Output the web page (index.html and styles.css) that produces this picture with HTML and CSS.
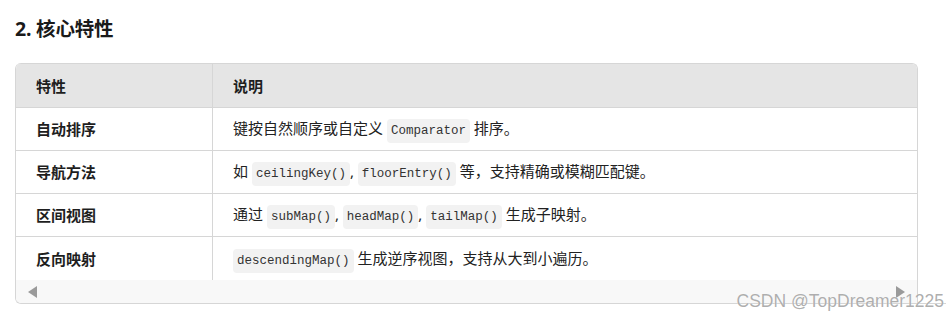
FILE: index.html
```html
<!DOCTYPE html>
<html lang="zh-CN">
<head>
<meta charset="utf-8">
<title>核心特性</title>
<link rel="stylesheet" href="styles.css">
</head>
<body>
<div class="page">
  <h2 class="title">2. 核心特性</h2>
  <div class="tbl-outer">
    <div class="tbl-box">
      <table class="tbl">
        <thead>
          <tr><th class="c1">特性</th><th>说明</th></tr>
        </thead>
        <tbody>
          <tr><td class="c1">自动排序</td><td>键按自然顺序或自定义 <code>Comparator</code> 排序。</td></tr>
          <tr><td class="c1">导航方法</td><td>如 <code>ceilingKey()</code>, <code>floorEntry()</code> 等，支持精确或模糊匹配键。</td></tr>
          <tr><td class="c1">区间视图</td><td>通过 <code>subMap()</code>, <code>headMap()</code>, <code>tailMap()</code> 生成子映射。</td></tr>
          <tr class="last"><td class="c1">反向映射</td><td><code>descendingMap()</code> 生成逆序视图，支持从大到小遍历。</td></tr>
        </tbody>
      </table>
      <div class="hscroll">
        <span class="arrow left"></span>
        <span class="arrow right"></span>
      </div>
    </div>
  </div>
  <div class="watermark">CSDN @TopDreamer1225</div>
</div>
</body>
</html>
```
FILE: styles.css
```css
html, body {
  margin: 0;
  padding: 0;
  background: #ffffff;
  overflow: hidden;
}
body {
  width: 946px;
  height: 316px;
  font-family: "Noto Sans", "Noto Sans CJK SC", sans-serif;
  color: #222;
}
.page {
  position: relative;
  padding: 16px 0 0 15px;
  height: 300px;
}
.title {
  margin: 0 0 21px 0;
  font-family: "Noto Sans", "Noto Sans CJK SC", sans-serif;
  font-size: 19.5px;
  line-height: 26px;
  font-weight: 700;
  color: #1a1a1a;
  letter-spacing: -0.2px;
}
.tbl-outer {
  width: 940px;
  border-left: 1px solid #d6d6d6;
  border-bottom: 1px solid #d6d6d6;
  border-radius: 6px 0 0 6px;
  overflow: hidden;
}
.tbl-box {
  width: 901px;
  border-top: 1px solid #d6d6d6;
  border-right: 1px solid #d6d6d6;
  border-radius: 0 6px 0 0;
  overflow: hidden;
}
.tbl {
  width: 100%;
  border-collapse: collapse;
  font-size: 15px;
}
.tbl th, .tbl td {
  height: 42px;
  padding: 0 20px;
  text-align: left;
  vertical-align: middle;
  border-bottom: 1px solid #d6d6d6;
  line-height: 20px;
}
.tbl th {
  height: 43px;
  background: #e5e5e5;
  font-weight: 700;
  color: #1e1e1e;
}
.tbl .c1 {
  width: 156px;
  border-right: 1px solid #d6d6d6;
  font-weight: 700;
  color: #1e1e1e;
}
.tbl td {
  color: #222;
}
.tbl tr.last td {
  height: 43px;
  border-bottom: none;
}
code {
  font-family: "Liberation Mono", "DejaVu Sans Mono", monospace;
  font-size: 12.5px;
  line-height: 18px;
  background: #f2f2f2;
  color: #333;
  border-radius: 4px;
  padding: 5px 4px;
}
.hscroll {
  height: 23px;
  background: #f8f8f8;
  display: flex;
  align-items: center;
  justify-content: space-between;
  padding: 0 12px 0 12px;
}
.arrow {
  width: 0;
  height: 0;
  border-top: 6px solid transparent;
  border-bottom: 6px solid transparent;
}
.arrow.left {
  border-right: 9px solid #9a9a9a;
}
.arrow.right {
  border-left: 9px solid #9a9a9a;
}
.watermark {
  position: absolute;
  right: 2px;
  top: 291px;
  font-family: "Liberation Sans", Arial, sans-serif;
  font-size: 17.5px;
  line-height: 20px;
  color: rgba(160, 160, 160, 0.85);
  text-shadow: 0 0 1px rgba(255,255,255,0.9);
  white-space: nowrap;
}
```
